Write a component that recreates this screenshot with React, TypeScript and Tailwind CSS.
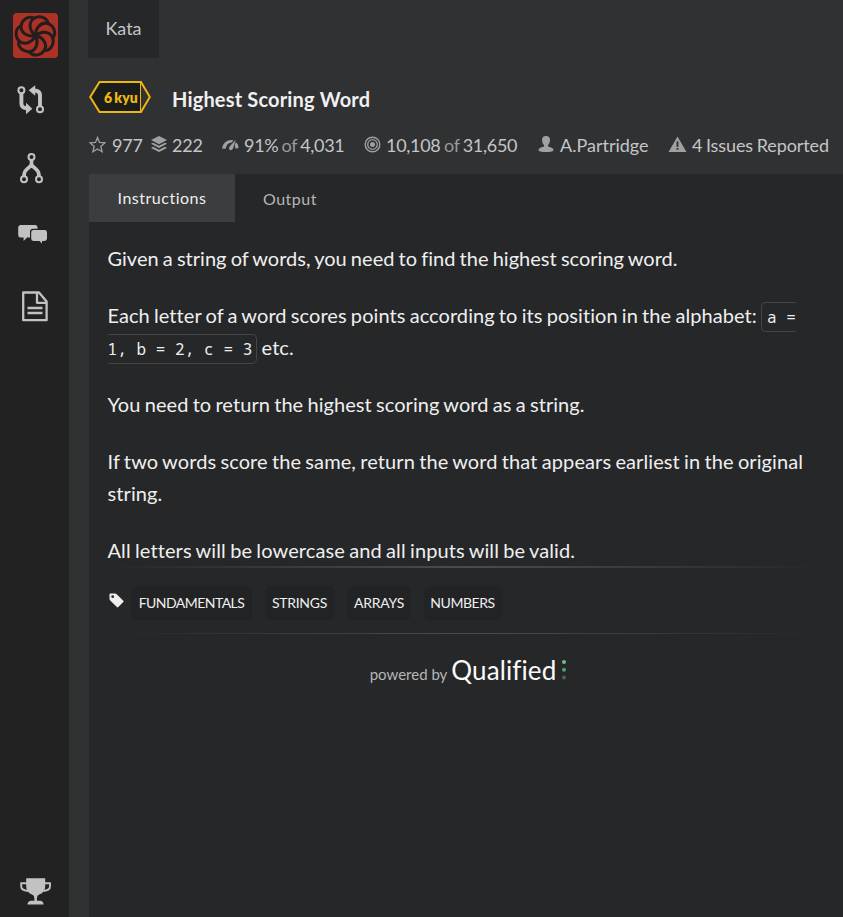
import React from "react";

const LOBES = [0, 1, 2, 3, 4, 5, 6];

function Logo() {
  return (
    <svg width="45" height="45" viewBox="0 0 45 45" className="block rounded-sm bg-[#ac3127]">
      <g transform="translate(22.5 22.5)" fill="none" stroke="#231d1c" strokeWidth="3" strokeLinecap="round" strokeLinejoin="round">
        {LOBES.map((i) => (
          <path
            key={i}
            transform={`rotate(${i * (360 / 7)})`}
            d="M0 0C-5.5-4-7.5-12-2.500-16.500C3-20.800 11-18.500 12.500-12.500"
          />
        ))}
      </g>
    </svg>
  );
}

function CompareIcon() {
  return (
    <svg width="28" height="30" viewBox="0 0 28 30" fill="none" stroke="#c2c2c2">
      <circle cx="4.4" cy="5.2" r="3" strokeWidth="2" />
      <circle cx="23" cy="24.2" r="3" strokeWidth="2" />
      <path d="M4.4 8v10.500q0 4.300 5 4.700M23 21.500V10.500q0-4.500-5-5" strokeWidth="3.900" />
      <path d="M9 17.800v11.500l6.300-5.600zM18.200.2v10.600L11.700 5.200z" fill="#c2c2c2" stroke="none" />
    </svg>
  );
}

function ForkIcon() {
  return (
    <svg width="24" height="31" viewBox="0 0 24 31" fill="none" stroke="#c2c2c2">
      <circle cx="11.500" cy="4" r="3" strokeWidth="2" />
      <circle cx="4" cy="26.300" r="3" strokeWidth="2" />
      <circle cx="19" cy="26.300" r="3" strokeWidth="2" />
      <path d="M11.500 7v3.500q0 2-2 3.500l-3 2.700q-2.500 2-2.500 6.600M11.500 10.500q0 2 2 3.500l3 2.700q2.500 2 2.500 6.600" strokeWidth="3.600" />
    </svg>
  );
}

function ChatIcon() {
  return (
    <svg width="30" height="20" viewBox="0 0 30 20" fill="#c2c2c2">
      <path d="M2.500 1H17q2.500 0 2.500 2.500v1.300H15q-3 0-3 3v5.700H9L5.600 17v-3.500H2.500Q.2 13.500.2 11V3.500Q.2 1 2.500 1Z" />
      <path d="M15.500 6h11q2.500 0 2.500 2.400v6.200q0 2.400-2.500 2.400H24v2.500L21.500 17h-6q-2.300 0-2.300-2.400V8.400Q13.200 6 15.500 6Z" />
    </svg>
  );
}

function DocIcon() {
  return (
    <svg width="26" height="31" viewBox="0 0 26 31" fill="none" stroke="#c2c2c2" strokeWidth="2.300">
      <path d="M1.200 1.500H17l7.600 9v18.700H1.200zM15 1.500v10.300h9.600M5.500 17h15M5.500 22h15" strokeLinejoin="round" />
    </svg>
  );
}

function TrophyIcon() {
  return (
    <svg width="31" height="27" viewBox="0 0 31 27">
      <path d="M6.200.2h19v8q0 6-6 8.400-2.300.8-2.300 3.600v2.600h3.700q2.900.7 2.900 3.700H7.500q0-3 3.200-3.700h3.700v-2.600q0-2.800-2.400-3.600-5.800-2.400-5.800-8.400z" fill="#c2c2c2" />
      <path d="M6.800 5.200H1.200v3.300q0 3.700 6.700 4.500M24.500 5.200H30v3.300q0 3.700-6.500 4.500" fill="none" stroke="#c2c2c2" strokeWidth="1.900" />
    </svg>
  );
}

function Rank() {
  return (
    <div className="relative h-8 w-[62px] shrink-0">
      <svg width="62" height="32" viewBox="0 0 62 32" className="block" stroke="#ecb613">
        <path d="M10.500 1H51.500V31H10.500L1.200 16z" fill="#1b1d1c" stroke="none" />
        <path d="M10.500 1H52L60.800 16 52 31H10.500L1.200 16z" fill="none" strokeWidth="2" />
        <path d="M51.500 1v30" strokeWidth="1" />
      </svg>
      <span className="absolute left-[15px] top-[9px] whitespace-nowrap text-[14px] font-extrabold leading-4 text-[#ecb613] [word-spacing:-1px]">6 kyu</span>
    </div>
  );
}

function Stats() {
  return (
    <div className="ml-5 flex h-8 items-center whitespace-nowrap text-[18px] leading-8 text-[#c4c5c6]">
      <div className="flex w-[61px] items-center">
        <svg width="17" height="17" viewBox="0 0 17 17" className="mr-[6px] -mt-0.5" fill="none" stroke="#a0a0a0" strokeWidth="1.300">
          <path d="M8.500 1.500l2 4.900 5.400.5-4.100 3.600 1.300 5.200-4.600-2.800-4.600 2.800 1.300-5.200L1.100 6.900l5.400-.5z" />
        </svg>
        <span className="tracking-[-0.2px]">977</span>
      </div>
      <div className="flex w-[72px] items-center">
        <svg width="18" height="17" viewBox="0 0 18 17" className="mr-1 -mt-0.5" fill="#a0a0a0">
          <path d="M9 0l8 4-8 4.200L1 4zM3 6.700l6 3.100 6-3.100 2 1.100-8 4.200-8-4.200zM3 10.800l6 3 6-3 2 1.100-8 4.200-8-4.200z" />
        </svg>
        <span className="tracking-[-0.2px]">222</span>
      </div>
      <div className="flex w-[142px] items-center tracking-[-0.3px]">
        <svg width="17" height="12" viewBox="0 0 17 12" className="mr-[5px]" fill="#a0a0a0">
          <path d="M0 9.500Q1.500 1 9.500 1l2 .3-1.800 2.300Q5 3.600 3.600 9.800zM13.800.8l-2.900 9Q9.500 12 7.500 10.700 6.300 9 7.800 7.200zM13.800 3.200Q16.500 5 16.500 9l-2.900.7-.9-3.500z" />
        </svg>
        91%<span className="ml-[3px] mr-[3px] text-[#98999a]">of</span>4,031
      </div>
      <div className="flex w-[174px] items-center tracking-[-0.3px]">
        <svg width="17" height="17" viewBox="0 0 17 17" className="mr-[5px] -mt-0.5" fill="none" stroke="#a0a0a0">
          <circle cx="8.500" cy="8.500" r="7.300" strokeWidth="1.400" />
          <circle cx="8.500" cy="8.500" r="4.800" strokeWidth="1.300" />
          <circle cx="8.500" cy="8.500" r="2.500" fill="#a0a0a0" stroke="none" />
        </svg>
        10,108<span className="ml-[3.5px] mr-[3px] text-[#98999a]">of</span>31,650
      </div>
      <div className="flex w-[130px] items-center">
        <svg width="16" height="16" viewBox="0 0 16 16" className="mr-[6px] -mt-0.5" fill="#a0a0a0">
          <path d="M8 0q4 0 4 4.200 0 3.200-2 5.100v1.200q5.500 1.200 5.500 3.500Q15.500 16 8 16T.5 14q0-2.300 5.500-3.500V9.300Q4 7.400 4 4.200 4 0 8 0Z" />
        </svg>
        A.Partridge
      </div>
      <div className="flex items-center tracking-[-0.1px] [word-spacing:-0.9px]">
        <svg width="19" height="16" viewBox="0 0 19 16" className="mr-[5px] -mt-0.5">
          <path d="M9.500.5L18.500 16H.5z" fill="#a0a0a0" />
          <path d="M9.500 5.500v5.300M9.500 12v1.800" stroke="#303133" strokeWidth="1.900" />
        </svg>
        4 Issues Reported
      </div>
    </div>
  );
}

const TAGS = [
  { name: "FUNDAMENTALS", size: "w-[121px] tracking-[-0.54px]" },
  { name: "STRINGS", size: "w-[70px] tracking-[-0.3px]" },
  { name: "ARRAYS", size: "w-16 tracking-[-0.25px]" },
  { name: "NUMBERS", size: "w-[78px] tracking-[-0.45px]" },
];

export default function App() {
  return (
    <div className="flex h-[917px] w-[843px] overflow-hidden bg-[#303133] font-[Lato,sans-serif]">
      <aside className="flex w-[69px] shrink-0 flex-col bg-[#222222]">
        <div className="ml-[13px] mt-[13px]"><Logo /></div>
        <div className="ml-[17px] mt-[27px]"><CompareIcon /></div>
        <div className="ml-5 mt-[38px]"><ForkIcon /></div>
        <div className="ml-[18px] mt-10"><ChatIcon /></div>
        <div className="ml-[22px] mt-[47px]"><DocIcon /></div>
        <div className="mb-3 ml-[19.5px] mt-auto"><TrophyIcon /></div>
      </aside>
      <main className="flex w-[774px] shrink-0 flex-col">
        <div className="ml-[19px] flex h-[58px] w-[71px] items-center justify-center bg-[#262729] pb-0.5 text-[18px] text-[#c4c5c6]">Kata</div>
        <header className="ml-5 mt-[23px] flex h-8 items-center">
          <Rank />
          <h1 className="ml-[21px] mt-[3px] text-[20px] font-bold leading-8 tracking-[0.17px] text-[#f0f0f0]">Highest Scoring Word</h1>
        </header>
        <div className="mt-4"><Stats /></div>
        <section className="ml-5 mt-[13px] flex-1 bg-[#262729]">
          <nav className="flex h-12 text-[16px] tracking-[0.5px]">
            <div className="flex w-[146px] items-center justify-center bg-[#3c3d3f] text-[#efefef]">Instructions</div>
            <div className="ml-7 flex items-center pt-0.5 text-[#b5b6b7]">Output</div>
          </nav>
          <article className="ml-[18.5px] mt-5 w-[702px] text-[20px] leading-8 text-[#efefef] [font-variant-ligatures:none] [word-spacing:-1px]">
            <p className="mb-[25px] tracking-[0.02px]">Given a string of words, you need to find the highest scoring word.</p>
            <p className="mb-[25px] tracking-[0.065px]">
              Each letter of a word scores points according to its position in the alphabet:{" "}
              <code className="rounded-[5px] border border-[#444547] py-[3px] pl-[5px] pr-1 font-['Noto_Sans_Mono','DejaVu_Sans_Mono',monospace] text-[16px] leading-none tracking-[0.06px] [word-spacing:0px]">a =<br />1, b = 2, c = 3</code> etc.
            </p>
            <p className="mb-[25px] tracking-[0.07px]">You need to return the highest scoring word as a string.</p>
            <p className="mb-[25px] tracking-[0.1px]">If two words score the same, return the word that appears earliest in the original string.</p>
            <p className="tracking-[0.11px]">All letters will be lowercase and all inputs will be valid.</p>
          </article>
          <div className="mx-[18px] h-0.5 bg-linear-to-r from-transparent via-[#4b4c4e] to-transparent" />
          <div className="ml-5 mt-[18px] flex h-[34px] items-center">
            <svg width="15" height="15" viewBox="0 0 15 15" className="-mt-1.5 mr-[7px]">
              <path d="M.5 1.500Q.5.500 1.500.500H6q1 0 1.700.7l6.600 6.500q.7.700 0 1.400l-5 5q-.7.700-1.400 0L1.200 7.500Q.5 6.800.5 6z" fill="#efefef" />
              <circle cx="3.700" cy="3.700" r="1.400" fill="#262729" />
            </svg>
            <div className="flex gap-[12.5px]">
              {TAGS.map((tag) => (
                <span key={tag.name} className={`flex h-[34px] items-center justify-center rounded-md bg-[#222325] pb-0.5 text-[14px] text-[#efefef] ${tag.size}`}>{tag.name}</span>
              ))}
            </div>
          </div>
          <div className="mx-[18px] mt-[13px] h-px bg-linear-to-r from-transparent via-[#4b4c4e] to-transparent" />
          <footer className="mt-[17px] flex h-9 items-baseline justify-center whitespace-nowrap pl-1">
            <span className="text-[15px] text-[#b5b6b7]">powered by</span>
            <span className="ml-1 text-[26px] tracking-[0.1px] text-[#fafafa] [font-variant-ligatures:none]">Qualified</span>
            <svg width="4" height="20" viewBox="0 0 4 20" className="ml-1.5">
              <circle cx="2" cy="2" r="2" fill="#6abf83" />
              <circle cx="2" cy="9.700" r="2" fill="#549d6d" />
              <circle cx="2" cy="17.500" r="2" fill="#3c6c4c" />
            </svg>
          </footer>
        </section>
      </main>
    </div>
  );
}
